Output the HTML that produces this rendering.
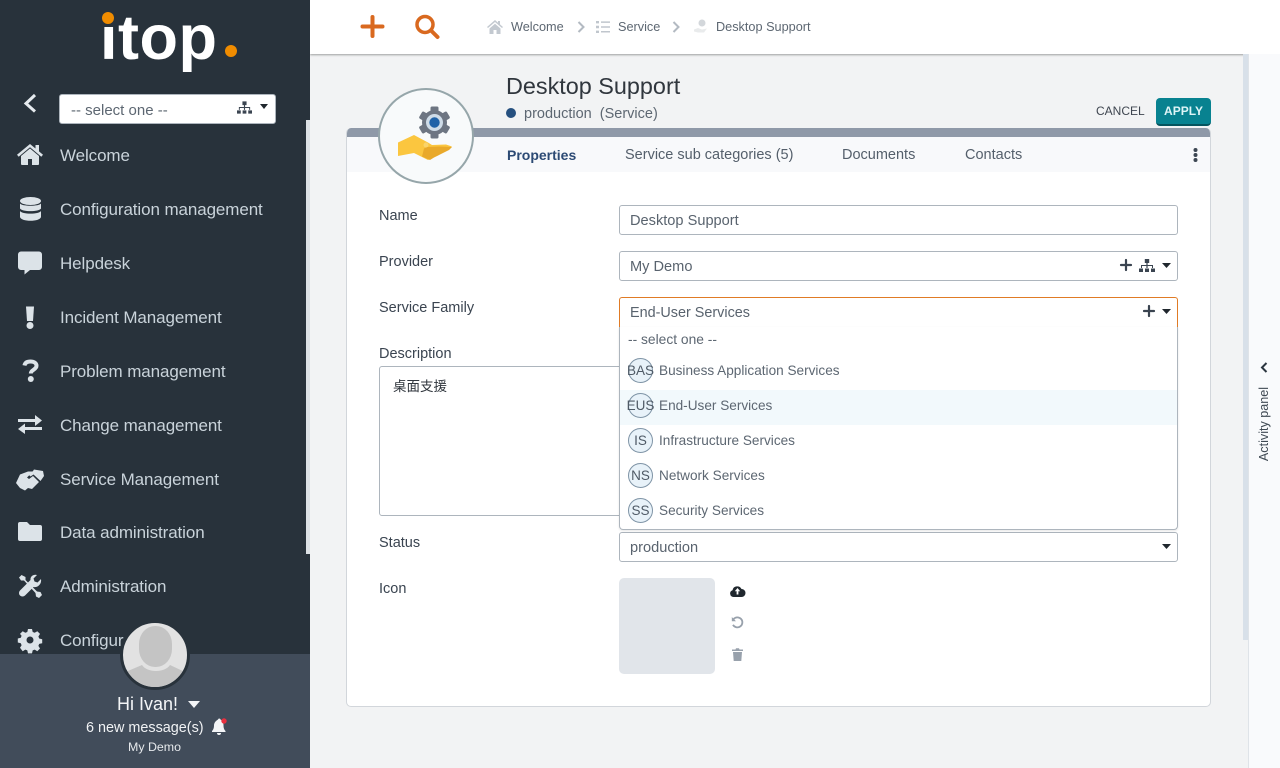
<!DOCTYPE html>
<html lang="en"><head><meta charset="utf-8"><title>Desktop Support</title>
<style>
*{box-sizing:border-box}
html,body{margin:0;padding:0;width:1280px;height:768px;overflow:hidden;background:#f2f3f4;font-family:"Liberation Sans","Noto Sans CJK SC",sans-serif;color:#3d4753}
.a{position:absolute;white-space:nowrap}
svg{position:absolute;display:block;overflow:visible}
.nav{position:absolute;left:60px;color:#c9d3da;font-size:17px;line-height:22px;white-space:nowrap;letter-spacing:-.1px;margin-top:1px}
.lbl{position:absolute;left:379px;font-size:14.5px;line-height:18px;color:#3a4450;margin-top:1px}
.inp{position:absolute;left:619px;width:559px;height:30px;background:#fff;border:1px solid #adb5bd;border-radius:3px;font-size:14.6px;line-height:30px;padding-left:10px;color:#59636e}
.tab{position:absolute;top:146px;font-size:14.5px;line-height:18px;color:#545f6b;white-space:nowrap}
.bc{position:absolute;top:19px;font-size:12.7px;line-height:16px;color:#5d6772;white-space:nowrap}
.opt{position:absolute;left:659px;font-size:13.6px;line-height:16px;color:#5d6772;white-space:nowrap;margin-top:1px}
.cir{position:absolute;left:628px;width:25px;height:25px;border-radius:50%;background:#e8f2f9;border:1px solid #7f94a6;font-size:13.5px;line-height:23px;text-align:center;color:#4f5a66;display:flex;align-items:center;justify-content:center;white-space:nowrap}
</style></head><body>

<!-- main top -->
<div class="a" style="left:310px;top:0;width:970px;height:54px;background:#fff;box-shadow:0 1px 2px rgba(0,0,0,.35)"></div>
<svg style="left:361px;top:16px" width="23" height="21" viewBox="0 0 23 21"><path d="M11.5 1v19M1.500 10.500h20" stroke="#d9691f" stroke-width="4" stroke-linecap="round" fill="none"/></svg>
<svg style="left:414px;top:14px" width="26" height="25" viewBox="0 0 26 25"><circle cx="11" cy="10.500" r="8" stroke="#d9691f" stroke-width="3.500" fill="none"/><path d="M17 16.500l6.500 6.500" stroke="#d9691f" stroke-width="4" stroke-linecap="round"/></svg>
<svg style="left:487px;top:20px" width="16" height="14" viewBox="0 0 16 14"><path d="M8 0L0 7l1 1 7-6 7 6 1-1-3-2.600V1h-2v1.700zM2.500 8.500L8 3.800l5.500 4.700V14H9.500v-4h-3v4h-4z" fill="#c3c9d0"/></svg>
<div class="bc" style="left:511px">Welcome</div>
<svg style="left:577px;top:21px" width="8" height="12" viewBox="0 0 8 12"><path d="M1.500 1l5 5-5 5" stroke="#b3bac2" stroke-width="2" fill="none"/></svg>
<svg style="left:596px;top:21px" width="14" height="12" viewBox="0 0 14 12"><path d="M0 0h3v2.400H0zM0 4.800h3v2.400H0zM0 9.600h3V12H0zM5 .4h9v1.500H5zM5 5.200h9v1.500H5zM5 10h9v1.500H5z" fill="#c0c6cd"/></svg>
<div class="bc" style="left:618px">Service</div>
<svg style="left:672px;top:21px" width="8" height="12" viewBox="0 0 8 12"><path d="M1.500 1l5 5-5 5" stroke="#b3bac2" stroke-width="2" fill="none"/></svg>
<svg style="left:693px;top:19px" width="15" height="15" viewBox="0 0 15 15"><circle cx="9" cy="4" r="3.500" fill="#d3d7db"/><path d="M1 10.500l4-1.500 4 1.500 5-1-3 4H5l-4-1z" fill="#e9ebec"/></svg>
<div class="bc" style="left:716px">Desktop Support</div>

<!-- title area -->
<div class="a" style="left:506px;top:72px;font-size:23.400px;line-height:28px;color:#30363d">Desktop Support</div>
<div class="a" style="left:506px;top:108px;width:10px;height:10px;border-radius:50%;background:#26507f"></div>
<div class="a" style="left:524px;top:105px;font-size:14.500px;line-height:18px;color:#5d6772">production&nbsp; (Service)</div>
<div class="a" style="left:1096px;top:103px;font-size:12px;line-height:16px;color:#3f4650">CANCEL</div>
<div class="a" style="left:1156px;top:98px;width:55px;height:28px;background:#088290;border-bottom:2px solid #05545e;border-radius:4px;color:#dff5f7;font-size:12px;font-weight:bold;line-height:26px;text-align:center">APPLY</div>

<!-- card -->
<div class="a" style="left:346px;top:128px;width:865px;height:579px;background:#fff;border:1px solid #d2d6db;border-top:0;border-radius:5px;overflow:hidden">
  <div style="height:9px;background:#8f99a8;margin:0 -1px"></div>
  <div style="height:35px;background:#f8f9fb"></div>
</div>

<!-- round icon -->
<div class="a" style="left:378px;top:88px;width:96px;height:96px;border-radius:50%;background:#f8fafb;border:2px solid #96a6aa"></div>
<svg style="left:396px;top:106px" width="60" height="58" viewBox="0 0 60 58">
<g fill="#6d7582"><circle cx="38.500" cy="16.500" r="12.500"/>
<rect x="34.500" y="0.500" width="8" height="32" rx="1.500"/>
<rect x="34.500" y="0.500" width="8" height="32" rx="1.500" transform="rotate(60 38.500 16.500)"/>
<rect x="34.500" y="0.500" width="8" height="32" rx="1.500" transform="rotate(120 38.500 16.500)"/></g>
<circle cx="38.500" cy="16.500" r="8.500" fill="#cfdce8"/><circle cx="38.500" cy="16.500" r="5.200" fill="#1f62a8"/>
<path d="M2 36.500L18 29l14 7.500 4 2.500 14-.5 6 2-14 9-10 4.500-14-7-16 3z" fill="#fbc63f"/>
<path d="M28 42.500l3-1.500 12-.5 13 .5-3 3-15 7.500-4 2.500-8-3.500z" fill="#e9a92a"/>
<circle cx="30" cy="39" r="2.500" fill="#fad46b"/>
</svg>

<!-- tabs -->
<div class="tab" style="left:507px;color:#2c4a74;font-weight:bold;font-size:14px">Properties</div>
<div class="tab" style="left:625px">Service sub categories (5)</div>
<div class="tab" style="left:842px">Documents</div>
<div class="tab" style="left:965px">Contacts</div>
<svg style="left:1193px;top:148px" width="5" height="14" viewBox="0 0 5 14"><circle cx="2.500" cy="2" r="2" fill="#3d4753"/><circle cx="2.500" cy="7" r="2" fill="#3d4753"/><circle cx="2.500" cy="12" r="2" fill="#3d4753"/></svg>

<!-- form -->
<div class="lbl" style="top:206px">Name</div>
<div class="inp" style="top:205px">Desktop Support</div>
<div class="lbl" style="top:252px">Provider</div>
<div class="inp" style="top:251px;line-height:31px">My Demo</div>
<svg style="left:1120px;top:259px" width="12" height="12" viewBox="0 0 12 12"><path d="M6 1v10M1 6h10" stroke="#3a4450" stroke-width="2.200" stroke-linecap="round"/></svg>
<svg style="left:1139px;top:259px" width="16" height="13" viewBox="0 0 16 13"><path d="M5.800 0h4.400v4H8.600v2h5.400v3h-1V7H8.600v2H7.400V7H3v2H2V6h5.400V4H5.800zM0 9.500h4V13H0zM6 9.500h4V13H6zM12 9.500h4V13h-4z" fill="#3a4450"/></svg>
<svg style="left:1162px;top:263px" width="9" height="5" viewBox="0 0 9 5"><path d="M0 0h9L4.500 5z" fill="#20272e"/></svg>

<div class="lbl" style="top:298px">Service Family</div>
<div class="a" style="left:619px;top:297px;width:559px;height:30px;background:#fff;border-style:solid;border-width:1px 1px 0 1px;border-color:#e07b25;border-radius:3px 3px 0 0;font-size:14.400px;line-height:30px;padding-left:10px;color:#59636e">End-User Services</div>
<svg style="left:1143px;top:305px" width="12" height="12" viewBox="0 0 12 12"><path d="M6 1v10M1 6h10" stroke="#3a4450" stroke-width="2.200" stroke-linecap="round"/></svg>
<svg style="left:1162px;top:309px" width="9" height="5" viewBox="0 0 9 5"><path d="M0 0h9L4.500 5z" fill="#20272e"/></svg>

<div class="lbl" style="top:344px">Description</div>
<div class="a" style="left:379px;top:366px;width:260px;height:150px;background:#fff;border:1px solid #adb5bd;border-radius:3px;font-size:13.500px;line-height:18px;padding:11px 0 0 13px;color:#30363d">桌面支援</div>

<div class="lbl" style="top:533px">Status</div>
<div class="inp" style="top:532px">production</div>
<svg style="left:1162px;top:544px" width="9" height="5" viewBox="0 0 9 5"><path d="M0 0h9L4.500 5z" fill="#20272e"/></svg>

<!-- dropdown -->
<div class="a" style="left:619px;top:327px;width:559px;height:203px;background:#fff;border:1px solid #adb5bd;border-top:0;border-radius:0 0 4px 4px;box-shadow:0 1px 2px rgba(0,0,0,.1)"></div>
<div class="a" style="left:620px;top:390px;width:557px;height:35px;background:#f2f9fc"></div>
<div class="a" style="left:628px;top:332px;font-size:13.800px;line-height:16px;color:#5d6772">-- select one --</div>
<div class="cir" style="top:358px">BAS</div><div class="opt" style="top:362px">Business Application Services</div>
<div class="cir" style="top:393px">EUS</div><div class="opt" style="top:397px">End-User Services</div>
<div class="cir" style="top:428px">IS</div><div class="opt" style="top:432px">Infrastructure Services</div>
<div class="cir" style="top:463px">NS</div><div class="opt" style="top:467px">Network Services</div>
<div class="cir" style="top:498px">SS</div><div class="opt" style="top:502px">Security Services</div>

<!-- icon field -->
<div class="lbl" style="top:579px">Icon</div>
<div class="a" style="left:619px;top:578px;width:96px;height:96px;background:#e1e5ea;border-radius:5px"></div>
<svg style="left:730px;top:585px" width="15" height="12" viewBox="0 0 15 12"><path d="M3.500 12A3.500 3.500 0 0 1 2.500 5.200 4.800 4.800 0 0 1 11.500 4a4 4 0 0 1 0 8z" fill="#20272e"/><path d="M7.500 3L4.800 6.200h1.800V9.500h1.800V6.200h1.800z" fill="#fff"/></svg>
<svg style="left:731px;top:616px" width="13" height="13" viewBox="0 0 13 13"><path d="M2.500 3.200A5 5 0 1 1 2 8.800" stroke="#98a1ac" stroke-width="1.800" fill="none"/><path d="M.8 1v4.200H5z" fill="#98a1ac"/></svg>
<svg style="left:732px;top:648px" width="11" height="13" viewBox="0 0 11 13"><path d="M0 1.500h3.500L4 .3h3l.5 1.200H11V3H0zM1 4h9l-.7 9H1.700z" fill="#98a1ac"/></svg>

<!-- activity panel -->
<div class="a" style="left:1248px;top:54px;width:32px;height:714px;background:#f9fafc;border-left:1px solid #dfe3e8"></div>
<div class="a" style="left:1243px;top:54px;width:5px;height:586px;background:#d8e0e9"></div>
<svg style="left:1260px;top:362px" width="8" height="11" viewBox="0 0 8 11"><path d="M6.500 1L2 5.500 6.500 10" stroke="#2c3640" stroke-width="2" fill="none"/></svg>
<div class="a" style="left:1264px;top:424px;font-size:12.600px;line-height:14px;color:#3f4953;transform:translate(-50%,-50%) rotate(-90deg)">Activity panel</div>

<!-- sidebar -->
<div class="a" style="left:0;top:0;width:310px;height:768px;background:#28323b"></div>
<div class="a" style="left:306px;top:120px;width:4px;height:434px;background:#dce1e5"></div>

<!-- logo -->
<div class="a" style="left:100px;top:-2px;font-size:63px;line-height:80px;font-weight:bold;color:#fff;letter-spacing:.5px">itop</div>
<div class="a" style="left:100px;top:8px;width:17px;height:19px;background:#28323b"></div>
<div class="a" style="left:102px;top:12px;width:12px;height:12px;border-radius:50%;background:#f08c00"></div>
<div class="a" style="left:225px;top:45px;width:12px;height:12px;border-radius:50%;background:#f08c00"></div>

<svg style="left:23px;top:93px" width="14" height="20" viewBox="0 0 14 20"><path d="M12 2L3 10.500l9 8" stroke="#e6ebef" stroke-width="3" fill="none"/></svg>
<div class="a" style="left:59px;top:94px;width:217px;height:30px;background:#fff;border:1px solid #adb5bd;border-radius:3px;font-size:15px;line-height:31px;padding-left:11px;color:#5d6772">-- select one --</div>
<svg style="left:237px;top:101px" width="15" height="13" viewBox="0 0 16 13"><path d="M5.800 0h4.400v4H8.600v2h5.400v3h-1V7H8.600v2H7.400V7H3v2H2V6h5.400V4H5.800zM0 9.500h4V13H0zM6 9.500h4V13H6zM12 9.500h4V13h-4z" fill="#3a4450"/></svg>
<svg style="left:260px;top:104px" width="8" height="5" viewBox="0 0 8 5"><path d="M0 0h8L4 5z" fill="#20272e"/></svg>

<svg style="left:17px;top:144px" width="26" height="21" viewBox="0 0 26 21" fill="#dce3e8"><path d="M13 4.500L4 12v8a1 1 0 0 0 1 1h6v-6h4v6h6a1 1 0 0 0 1-1v-8z"/><path d="M13 0L0 10.700l1.700 2L13 3.300l11.300 9.400 1.700-2-4-3.300V1h-3.500v3.500z"/></svg>
<div class="nav" style="top:144px">Welcome</div>
<svg style="left:20px;top:197px" width="21" height="24" viewBox="0 0 21 24" fill="#dce3e8"><ellipse cx="10.500" cy="4" rx="10.500" ry="4"/><path d="M0 6.500C2 9.500 19 9.500 21 6.500V11.500C19 15 2 15 0 11.500zM0 14C2 17.500 19 17.500 21 14v6c-1 5-20 5-21 0z"/></svg>
<div class="nav" style="top:198px">Configuration management</div>
<svg style="left:18px;top:251px" width="24" height="24" viewBox="0 0 24 24" fill="#dce3e8"><path d="M3 .5h18a3 3 0 0 1 3 3V16a3 3 0 0 1-3 3h-9l-5.500 4.500V19H3a3 3 0 0 1-3-3V3.500a3 3 0 0 1 3-3z"/></svg>
<div class="nav" style="top:252px">Helpdesk</div>
<svg style="left:25px;top:305px" width="10" height="24" viewBox="0 0 10 24" fill="#dce3e8"><path d="M1 1.500h8L8 16H2z"/><circle cx="5" cy="20.500" r="3.500"/></svg>
<div class="nav" style="top:306px">Incident Management</div>
<svg style="left:22px;top:359px" width="17" height="23" viewBox="0 0 17 23"><path d="M2.500 6.500C3 3.500 5.500 2.500 8.500 2.500c3.500 0 6 1.600 6 4.300 0 4-5.700 3.900-5.700 7.700" stroke="#dce3e8" stroke-width="4" fill="none"/><circle cx="8.800" cy="20" r="3" fill="#dce3e8"/></svg>
<div class="nav" style="top:360px">Problem management</div>
<svg style="left:18px;top:415px" width="24" height="19" viewBox="0 0 24 19" fill="#dce3e8"><path d="M0 4h17V0l7 5.500-7 5.500V7H0zM24 12H7V8.500L0 14l7 5v-4h17z"/></svg>
<div class="nav" style="top:414px">Change management</div>
<svg style="left:16px;top:468px" width="28" height="23" viewBox="0 0 28 23" fill="#dce3e8"><path d="M0 15L4 6.500 12 3.500h5L11 9.500l2 1.500 4-3 6 6-7 7-4-1-3 2.500-5-2.500z"/><path d="M18 1.500l9 1.500 1 5-3.500 5-7-6.500-3 2-1.500-1.500 4-4z"/></svg>
<div class="nav" style="top:468px">Service Management</div>
<svg style="left:18px;top:522px" width="24" height="19" viewBox="0 0 24 19" fill="#dce3e8"><path d="M2 0h7l3 3h10a2 2 0 0 1 2 2v12a2 2 0 0 1-2 2H2a2 2 0 0 1-2-2V2a2 2 0 0 1 2-2z"/></svg>
<div class="nav" style="top:521px">Data administration</div>
<svg style="left:18px;top:574px" width="24" height="24" viewBox="0 0 24 24" fill="#dce3e8"><path d="M1 3.500L3.500 1l4 2v3l11.500 11.500 3.500.5 1.500 3-3 3-3-1.500-.5-3.500L6 6.500H3z"/><path d="M23 5l-3.500 3.500L16.500 7.500l-1-3L19 1c-3-1-7 1-6.500 5L2 16.500a3.500 3.500 0 0 0 5 5L13.500 15l2-2c3.500 1 8.500-2.500 7.500-8z"/></svg>
<div class="nav" style="top:575px">Administration</div>
<svg style="left:19px;top:629px" width="22" height="22" viewBox="0 0 22 22"><path fill-rule="evenodd" fill="#dce3e8" d="M9 0h4l.7 3 2 .8 2.600-1.600 2.700 2.700-1.600 2.600.8 2 3 .7v4l-3 .7-.8 2 1.600 2.600-2.700 2.700-2.600-1.600-2 .8-.7 3H9l-.7-3-2-.8-2.600 1.600L1 18.800l1.600-2.600-.8-2-3-.7v-4l3-.7.8-2L1 4.900l2.700-2.700 2.600 1.600 2-.8zM11 7.500a3.500 3.500 0 1 0 0 7 3.500 3.500 0 0 0 0-7z"/></svg>
<div class="nav" style="top:629px">Configuration</div>

<!-- footer -->
<div class="a" style="left:0;top:654px;width:310px;height:114px;background:#414c5a"></div>
<div class="a" style="left:120px;top:620px;width:70px;height:70px;border-radius:50%;background:#e2e2e2;border:3px solid #28323b;overflow:hidden">
  <svg style="left:0;top:0" width="64" height="64" viewBox="0 0 64 64"><rect x="16" y="3" width="33" height="41" rx="16" ry="18" fill="#c4c4c4"/><path d="M0 64V50l19-8c5 8 23 8 28 0l17 8v14z" fill="#c4c4c4"/></svg>
</div>
<div class="a" style="left:117px;top:693px;font-size:18px;line-height:22px;color:#f3f5f7">Hi Ivan!</div>
<svg style="left:188px;top:701px" width="12" height="7" viewBox="0 0 12 7"><path d="M0 0h12L6 7z" fill="#f3f5f7"/></svg>
<div class="a" style="left:86px;top:719px;font-size:14.400px;line-height:18px;color:#f0f2f4">6 new message(s)</div>
<svg style="left:211px;top:718px" width="17" height="18" viewBox="0 0 17 18"><path d="M7 1.500a1.300 1.300 0 0 1 2.500 0C12 3 12.500 5 12.500 7.500c0 3 1 4.500 2 5.500v1H1v-1c1-1 2-2.500 2-5.500C3 5 4.500 3 7 1.500zM6 15h4a2 2 0 0 1-4 0z" fill="#f3f5f7"/><circle cx="13" cy="3" r="2.700" fill="#e8303f"/></svg>
<div class="a" style="left:128px;top:740px;font-size:12.400px;line-height:15px;color:#e6e9ec">My Demo</div>

</body></html>
